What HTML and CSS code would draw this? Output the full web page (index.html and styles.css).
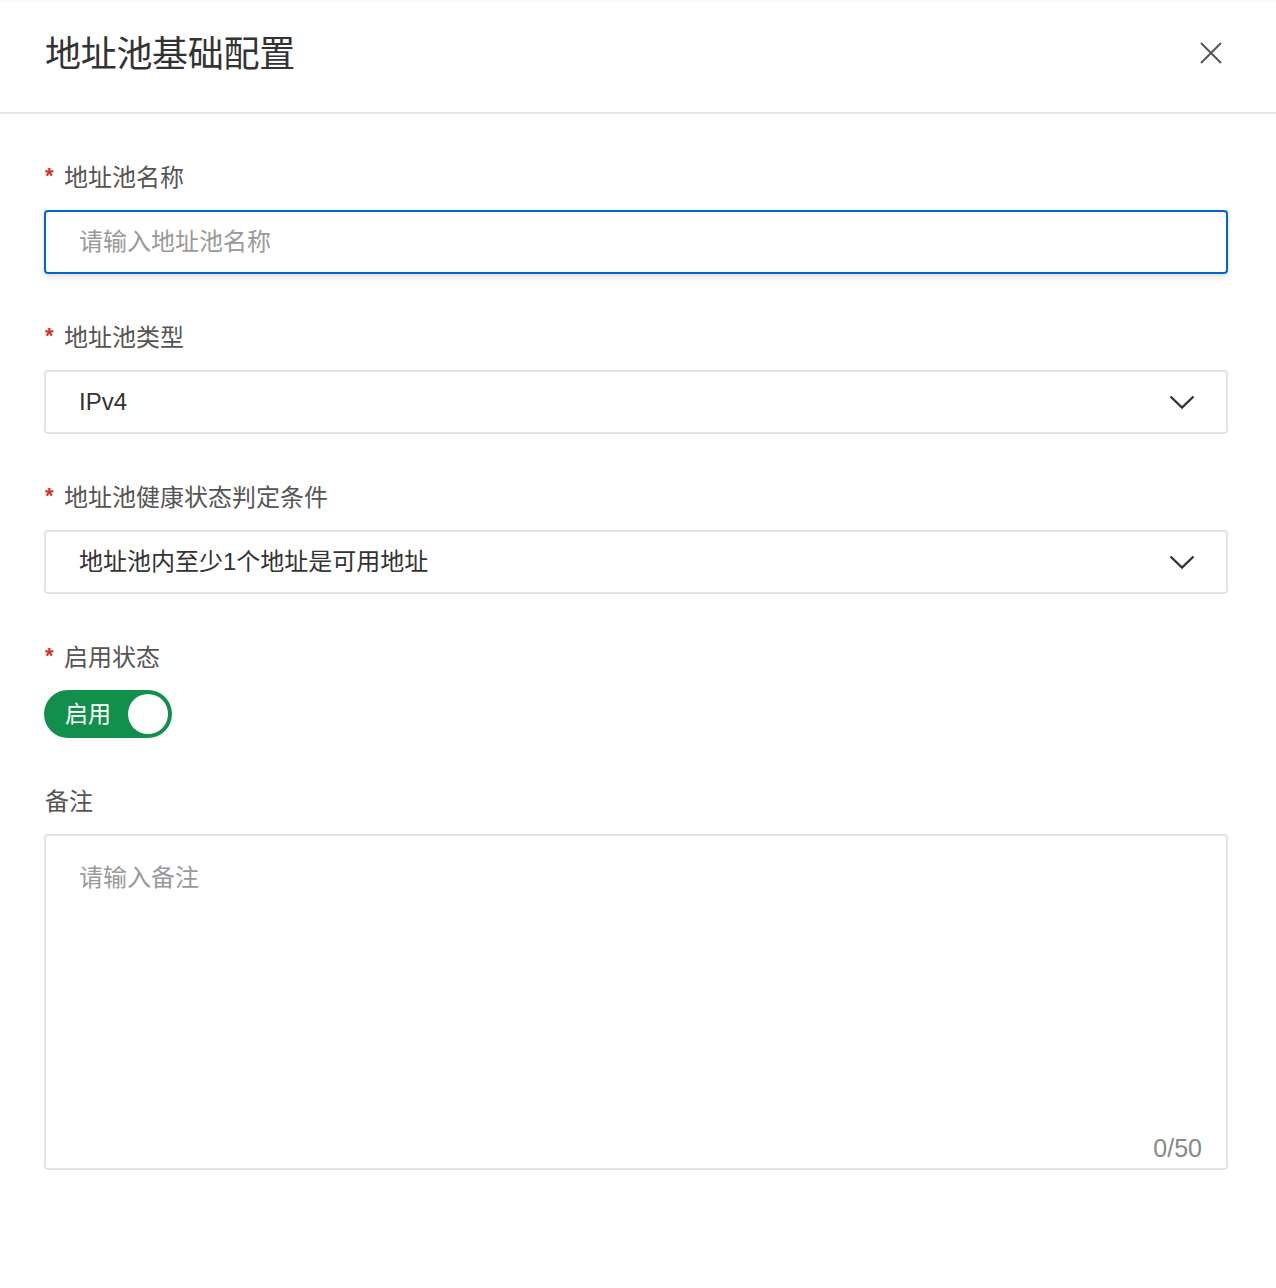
FILE: index.html
```html
<!DOCTYPE html>
<html lang="zh-CN">
<head>
<meta charset="utf-8">
<title>地址池基础配置</title>
<link rel="stylesheet" href="styles.css">
</head>
<body>
<div class="panel">
  <header class="header">
    <h1 class="title">地址池基础配置</h1>
    <button class="close" aria-label="关闭">
      <svg width="24" height="24" viewBox="0 0 24 24"><path d="M2 2 L22 22 M22 2 L2 22" stroke="#555" stroke-width="2" fill="none"/></svg>
    </button>
  </header>
  <form class="form">
    <div class="field">
      <label class="label"><span class="req">*</span>地址池名称</label>
      <div class="control focused"><span class="placeholder">请输入地址池名称</span></div>
    </div>
    <div class="field">
      <label class="label"><span class="req">*</span>地址池类型</label>
      <div class="control select"><span class="value">IPv4</span>
        <svg class="chev" width="26" height="14" viewBox="0 0 26 14"><path d="M1.5 1.5 L13 12.5 L24.5 1.5" stroke="#333" stroke-width="2.4" fill="none"/></svg>
      </div>
    </div>
    <div class="field">
      <label class="label"><span class="req">*</span>地址池健康状态判定条件</label>
      <div class="control select"><span class="value">地址池内至少1个地址是可用地址</span>
        <svg class="chev" width="26" height="14" viewBox="0 0 26 14"><path d="M1.5 1.5 L13 12.5 L24.5 1.5" stroke="#333" stroke-width="2.4" fill="none"/></svg>
      </div>
    </div>
    <div class="field">
      <label class="label"><span class="req">*</span>启用状态</label>
      <div class="switch"><span class="switch-text">启用</span><span class="knob"></span></div>
    </div>
    <div class="field">
      <label class="label">备注</label>
      <div class="textarea"><span class="placeholder">请输入备注</span><span class="count">0/50</span></div>
    </div>
  </form>
</div>
</body>
</html>
```
FILE: styles.css
```css
* { box-sizing: border-box; }
html, body { margin: 0; padding: 0; background: #fff; }
body {
  font-family: "Liberation Sans", "Noto Sans CJK SC", sans-serif;
  color: #333;
  width: 1276px;
}
.panel { background: #fff; }
.header {
  height: 114px;
  border-bottom: 2px solid #e6e6e6;
  display: flex;
  align-items: center;
  justify-content: space-between;
  padding: 0 53px 0 45px;
  box-shadow: inset 0 3px 4px -3px rgba(0,0,0,0.06);
}
.title {
  margin: 0;
  font-size: 36px;
  font-weight: 400;
  line-height: 48px;
  color: #333;
  margin-top: -3px;
  letter-spacing: -0.3px;
}
.close {
  border: 0;
  background: none;
  padding: 0;
  width: 24px;
  height: 24px;
  margin-top: -6px;
  cursor: pointer;
}
.close svg { display: block; }
.form {
  padding: 48px 48px 0 44px;
  display: flex;
  flex-direction: column;
  gap: 48px;
}
.field { display: flex; flex-direction: column; gap: 16px; }
.label {
  font-size: 24px;
  line-height: 32px;
  color: #555;
  display: flex;
  align-items: center;
  padding-left: 1px;
}
.req {
  color: #d93026;
  font-size: 22px;
  width: 19px;
  font-family: "Liberation Sans", sans-serif;
  font-weight: 700;
  position: relative;
  top: -2px;
}
.control {
  height: 64px;
  border: 2px solid #e3e3e3;
  border-radius: 4px;
  display: flex;
  align-items: center;
  padding: 0 31px 0 33px;
  font-size: 24px;
}
.control.focused {
  border-color: #0064c8;
  box-shadow: 0 3px 6px rgba(0,0,0,0.12);
}
.placeholder { color: #999; font-size: 24px; line-height: 32px; }
.select { justify-content: space-between; }
.value { color: #333; line-height: 32px; }
.chev { display: block; }
.switch {
  width: 128px;
  height: 48px;
  border-radius: 24px;
  background: #12904b;
  display: flex;
  align-items: center;
  justify-content: space-between;
  padding: 0 4px 0 21px;
}
.switch-text { color: #fff; font-size: 23px; line-height: 32px; }
.knob {
  width: 40px;
  height: 40px;
  border-radius: 50%;
  background: #fff;
}
.textarea {
  height: 336px;
  border: 2px solid #e3e3e3;
  border-radius: 4px;
  padding: 26px 24px 4px 33px;
  display: flex;
  flex-direction: column;
  justify-content: space-between;
}
.count {
  align-self: flex-end;
  color: #888;
  font-size: 25px;
  line-height: 32px;
}
```
